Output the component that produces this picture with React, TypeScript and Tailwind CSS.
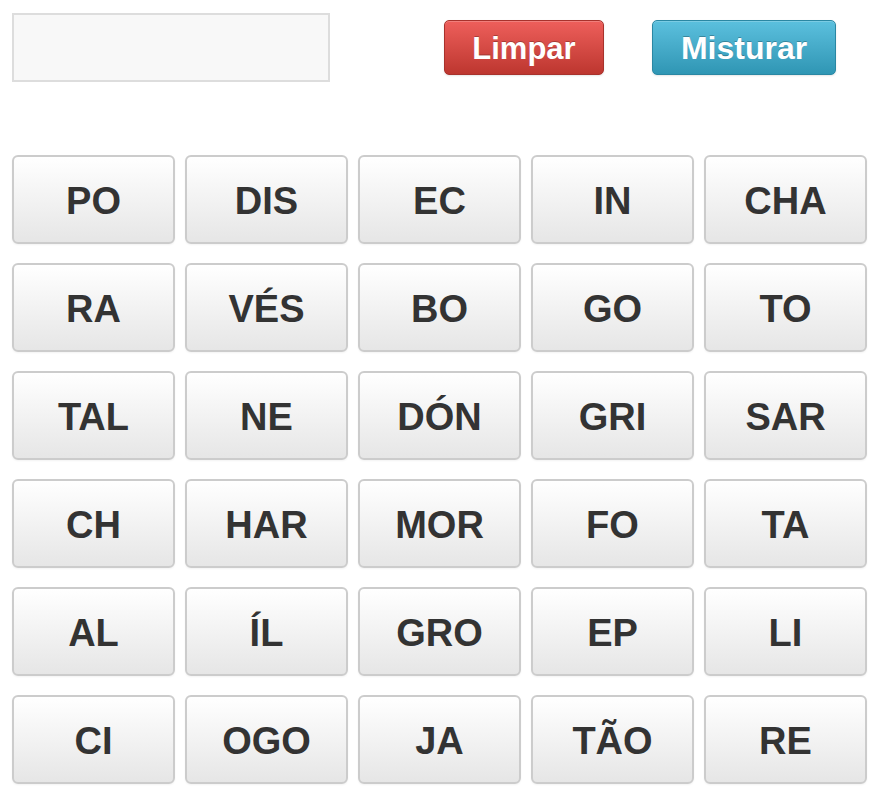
const syllables = [
  ["PO", "DIS", "EC", "IN", "CHA"],
  ["RA", "VÉS", "BO", "GO", "TO"],
  ["TAL", "NE", "DÓN", "GRI", "SAR"],
  ["CH", "HAR", "MOR", "FO", "TA"],
  ["AL", "ÍL", "GRO", "EP", "LI"],
  ["CI", "OGO", "JA", "TÃO", "RE"],
];

const font = { fontFamily: '"Liberation Sans", Arial, sans-serif' };

export default function App() {
  return (
    <main className="min-h-screen bg-white px-3 pt-[13px]" style={font}>
      <div className="flex items-center">
        <input
          type="text"
          className="h-[69px] w-[318px] border-2 border-[#dddddd] bg-[#f8f8f8] px-3 text-2xl outline-none"
        />
        <button className="ml-[114px] h-[55px] w-[160px] rounded-[5px] border border-[#a8322c] bg-gradient-to-b from-[#ee5f5b] to-[#bd362f] pt-[3px] text-[31px] font-bold text-white shadow-[inset_0_1px_0_rgba(255,255,255,0.2),0_1px_2px_rgba(0,0,0,0.1)] [text-shadow:0_-1px_0_rgba(0,0,0,0.25)]">
          Limpar
        </button>
        <button className="ml-[48px] h-[55px] w-[184px] rounded-[5px] border border-[#2a87a3] bg-gradient-to-b from-[#5bc0de] to-[#2f96b4] pt-[1px] text-[32px] font-bold text-white shadow-[inset_0_1px_0_rgba(255,255,255,0.2),0_1px_2px_rgba(0,0,0,0.1)] [text-shadow:0_-1px_0_rgba(0,0,0,0.25)]">
          Misturar
        </button>
      </div>

      <div className="mt-[73px] grid w-[855px] grid-cols-5 gap-x-[10px] gap-y-[19px]">
        {syllables.flat().map((s, i) => (
          <button
            key={i}
            className="flex h-[89px] items-center justify-center rounded-[6px] border-2 border-[#cccccc] bg-gradient-to-b from-white to-[#e6e6e6] pt-[4px] text-[38px] font-bold text-[#333333] shadow-[0_1px_2px_rgba(0,0,0,0.05)]"
          >
            {s}
          </button>
        ))}
      </div>
    </main>
  );
}
